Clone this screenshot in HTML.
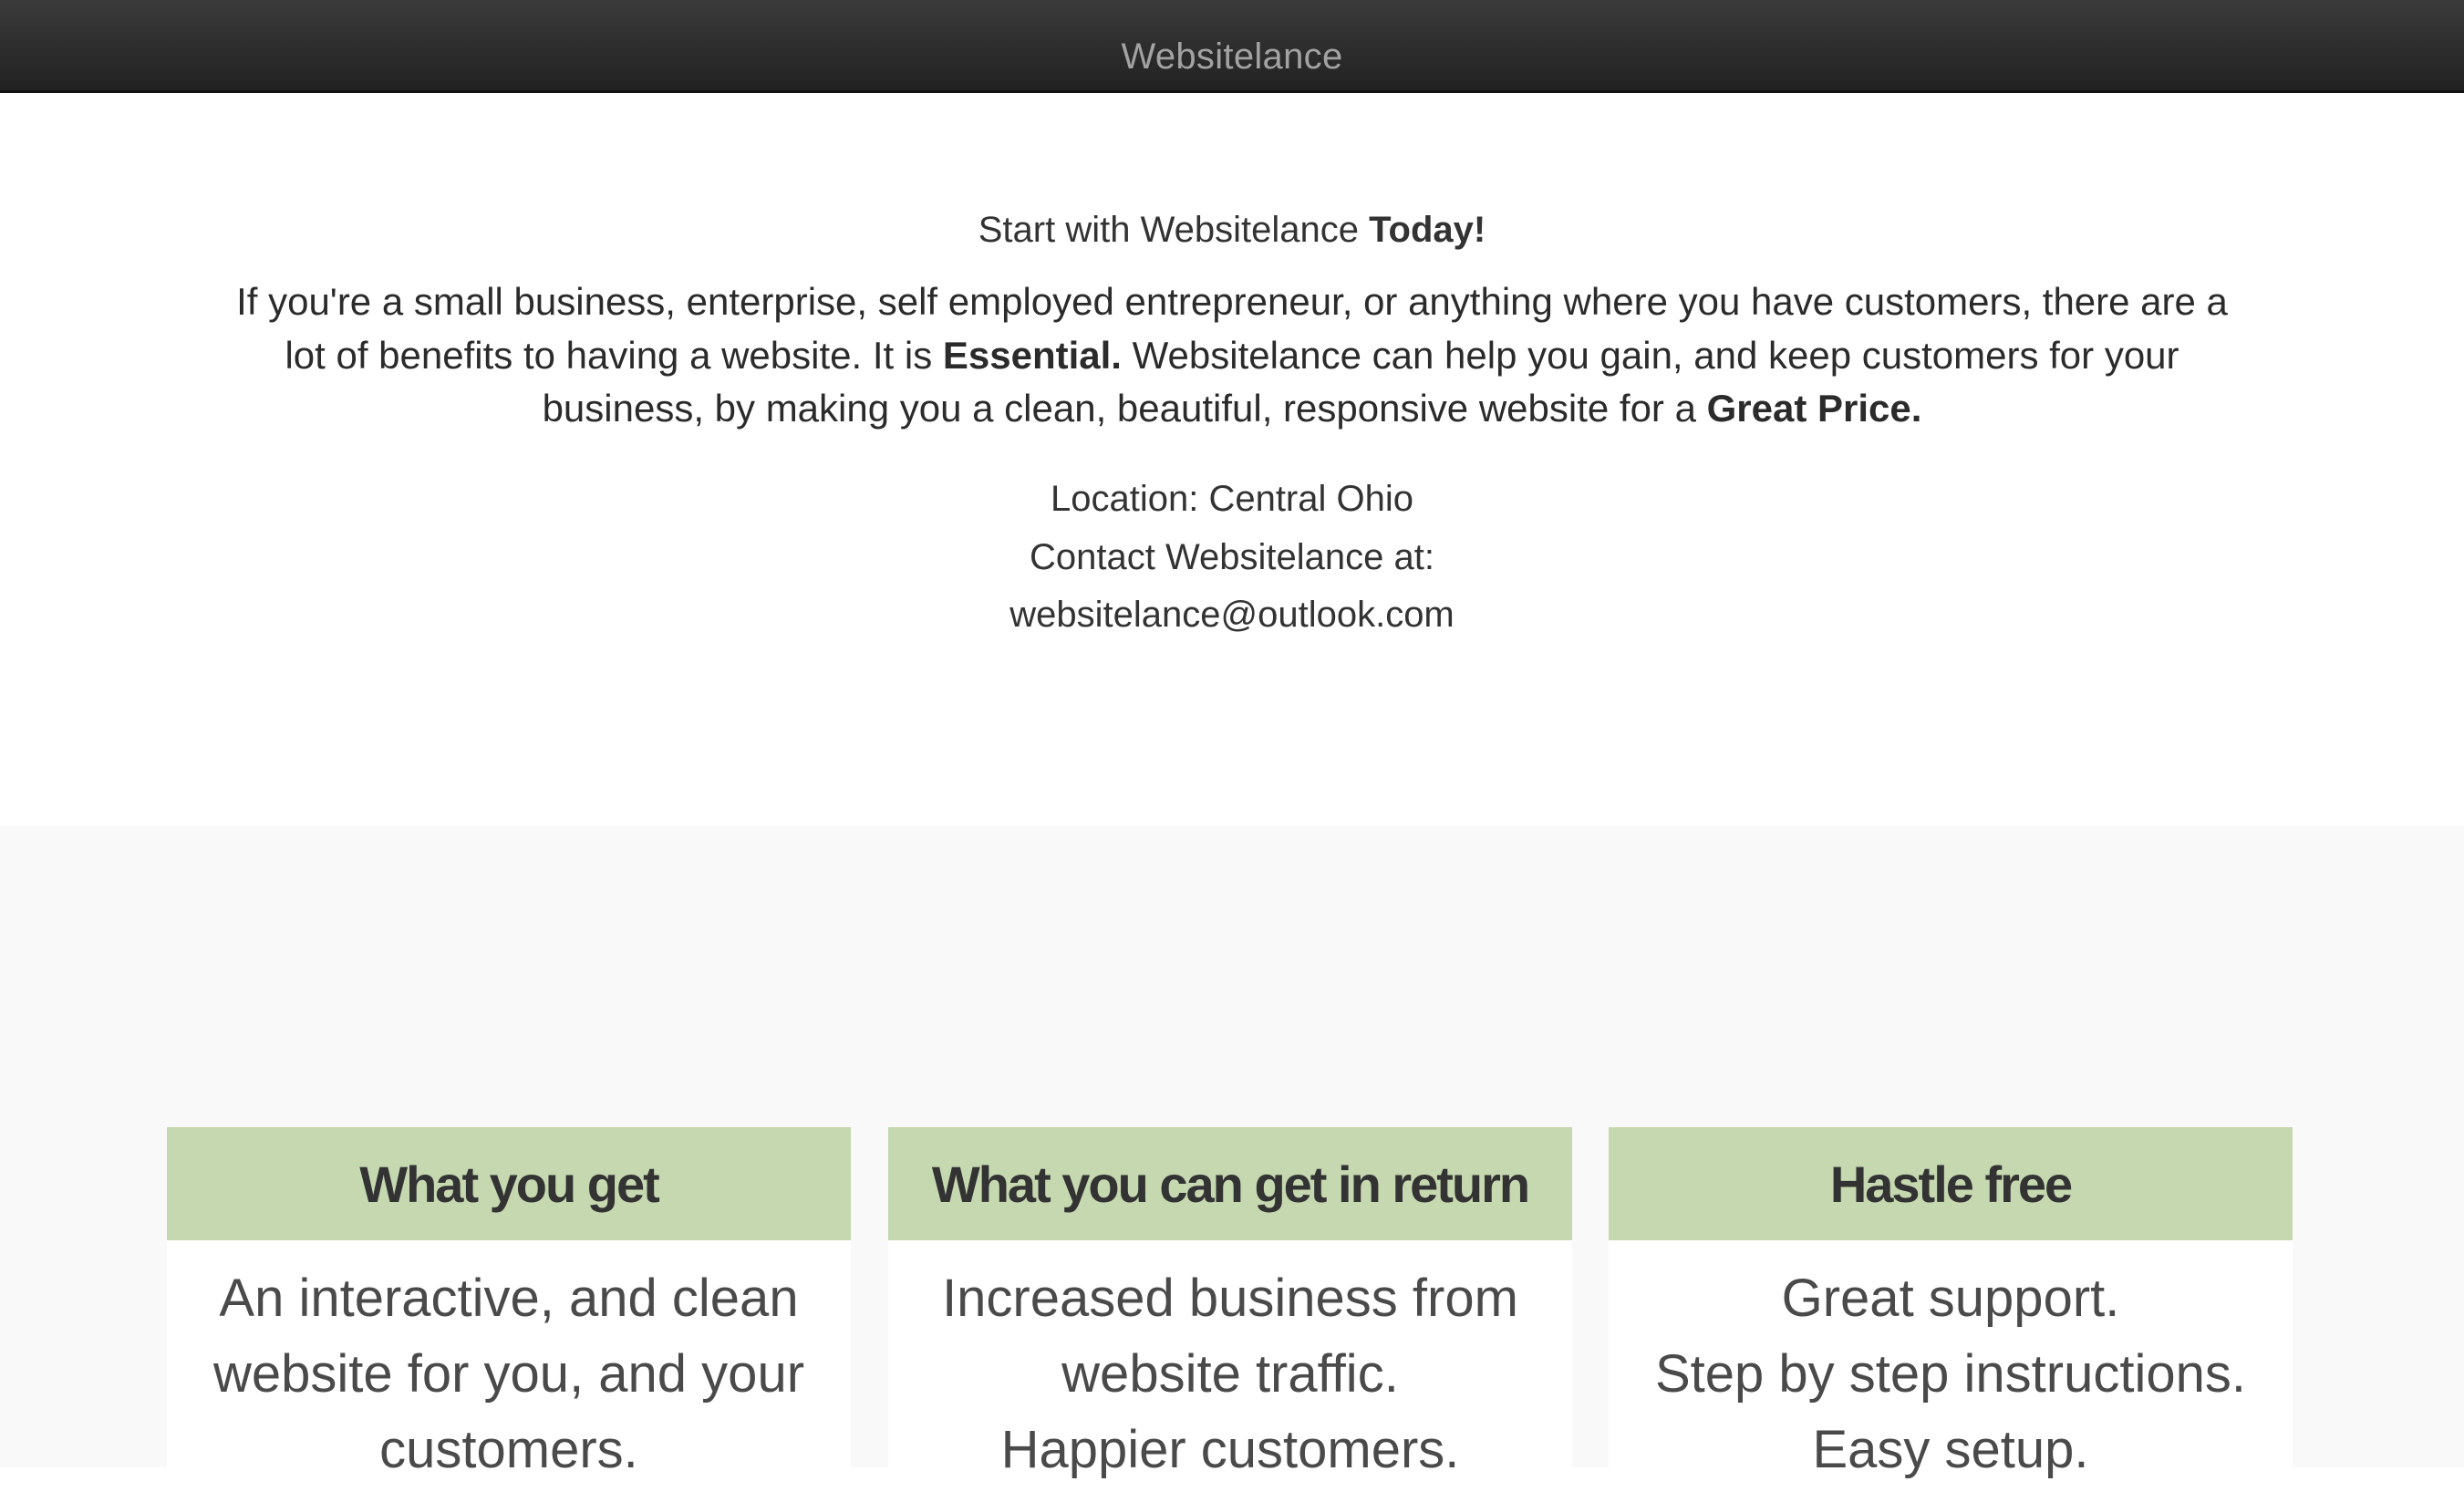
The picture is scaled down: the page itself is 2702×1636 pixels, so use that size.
<!DOCTYPE html>
<html><head><meta charset="utf-8"><style>
*{margin:0;padding:0;box-sizing:border-box}
html,body{width:2702px;height:1609px;overflow:hidden;background:#fff;font-family:"Liberation Sans",sans-serif;color:#333}
.hdr{position:absolute;left:0;top:0;width:2702px;height:102px;background:linear-gradient(#3a3a3a,#222);border-bottom:3px solid #111}
.hdr div{position:absolute;left:0;width:100%;top:38px;text-align:center;font-size:40px;line-height:48px;color:#a2a2a2;font-weight:300;letter-spacing:0.3px}
.c{position:absolute;left:0;width:2702px;text-align:center;white-space:nowrap}
.start{top:228px;font-size:40px;line-height:48px;color:#333}
.para{top:302px;font-size:42px;line-height:58.5px;color:#2b2b2b}
.loc{top:516px;font-size:40px;line-height:63.5px;color:#333}
.gray{position:absolute;left:0;top:905px;width:2702px;height:704px;background:#f9f9f9}
.card{position:absolute;top:1236px;width:750px;height:400px;background:#fff}
.card h2{height:124px;background:#c5d8b0;text-align:center;font-size:56px;line-height:126px;font-weight:bold;color:#333;letter-spacing:-2px}
.card p{text-align:center;font-size:58px;line-height:83px;color:#4a4a4a;padding-top:22px;letter-spacing:0}
</style></head><body>
<div class="hdr"><div>Websitelance</div></div>
<div class="c start">Start with Websitelance <b>Today!</b></div>
<div class="c para">If you're a small business, enterprise, self employed entrepreneur, or anything where you have customers, there are a<br>lot of benefits to having a website. It is <b>Essential.</b> Websitelance can help you gain, and keep customers for your<br>business, by making you a clean, beautiful, responsive website for a <b>Great Price.</b></div>
<div class="c loc">Location: Central Ohio<br>Contact Websitelance at:<br>websitelance@outlook.com</div>
<div class="gray"></div>
<div class="card" style="left:183px"><h2>What you get</h2><p>An interactive, and clean<br>website for you, and your<br>customers.</p></div>
<div class="card" style="left:974px"><h2>What you can get in return</h2><p>Increased business from<br>website traffic.<br>Happier customers.</p></div>
<div class="card" style="left:1764px"><h2>Hastle free</h2><p>Great support.<br>Step by step instructions.<br>Easy setup.</p></div>
</body></html>
